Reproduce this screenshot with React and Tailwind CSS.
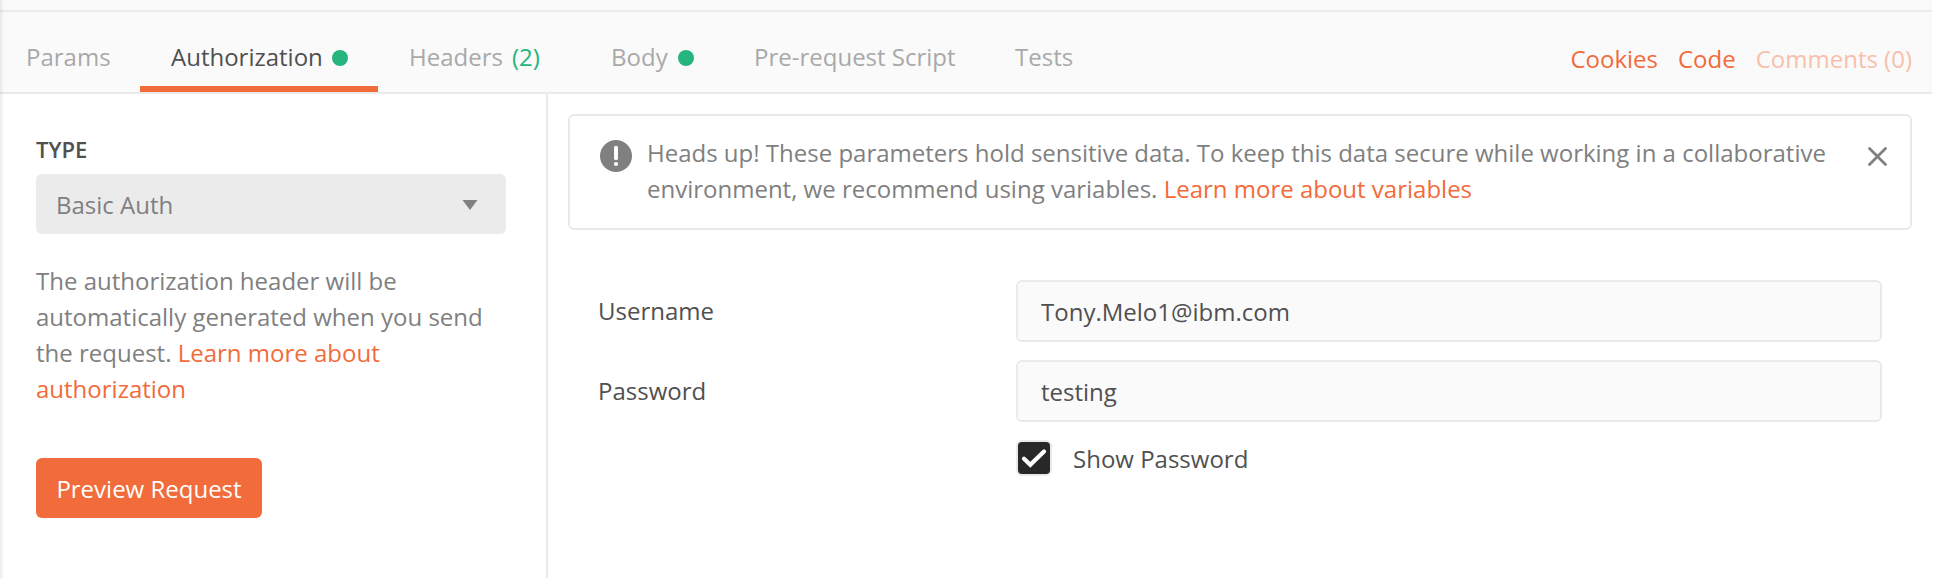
const tabs = [
  { label: "Params", box: "w-[140px] pl-[26px]" },
  { label: "Authorization", box: "w-[238px] pl-[31px]", active: true, dot: "ml-[9px]" },
  { label: "Headers", box: "w-[202px] pl-[31px]", count: "(2)" },
  { label: "Body", box: "w-[143px] pl-[31px]", dot: "ml-2.5" },
  { label: "Pre-request Script", box: "w-[261px] pl-[31px]" },
  { label: "Tests", box: "w-[120px] pl-[31px]" },
];

function Tab({ label, box, active, dot, count }) {
  return (
    <button
      className={`flex h-20 shrink-0 items-start border-b-[6px] pt-[27px] whitespace-nowrap ${box} ${
        active ? "border-[#f26b3a] text-[#505050]" : "border-transparent text-[#a9a9a9]"
      }`}
    >
      {label}
      {count && <span className="ml-[9px] text-[#26b47f]">{count}</span>}
      {dot && <span className={`mt-[11px] size-4 rounded-full bg-[#26b47f] ${dot}`} />}
    </button>
  );
}

function Field({ label, value }) {
  return (
    <div className="flex h-[62px] items-center">
      <label className="w-[418px] text-[#505050]">{label}</label>
      <input
        readOnly
        value={value}
        className="h-[62px] w-[866px] rounded-md border-2 border-[#eaeaea] bg-[#fafafa] px-[23px] text-[#505050] outline-none"
      />
    </div>
  );
}

export default function App() {
  return (
    <div className="relative flex h-[578px] w-[1932px] flex-col overflow-hidden bg-white font-['Open_Sans',sans-serif] text-[24px] leading-[36px] text-[#808080]">
      <div className="absolute inset-y-0 left-0 w-1 bg-linear-to-r from-black/8 to-transparent" />
      <div className="h-3 shrink-0 border-b-2 border-[#eaeaea] bg-[#fafafa]" />
      <header className="flex h-[82px] shrink-0 justify-between border-b-2 border-[#eaeaea] bg-[#fafafa]">
        <nav className="flex">
          {tabs.map((t) => (
            <Tab key={t.label} {...t} />
          ))}
        </nav>
        <div className="flex gap-5 pt-[29px] pr-5 text-[#f26b3a]">
          <a>Cookies</a>
          <a>Code</a>
          <a className="text-[#f8c0aa]">Comments (0)</a>
        </div>
      </header>
      <div className="flex min-h-0 flex-1">
        <aside className="w-[548px] shrink-0 border-r-2 border-[#eaeaea] pt-[37px] pl-9">
          <h2 className="text-[22px] leading-9 font-semibold text-[#505050]">TYPE</h2>
          <button className="mt-[7px] flex h-[60px] w-[470px] items-center justify-between rounded-md bg-[#ebebeb] pr-7 pl-5">
            <span className="pt-0.5">Basic Auth</span>
            <svg className="mt-0.5 h-2.5 w-4" viewBox="0 0 16 10" fill="#808080">
              <path d="M0.5 0H15.5L8 10Z" />
            </svg>
          </button>
          <p className="mt-[29px] w-[470px]">
            The authorization header will be
            <br />
            automatically generated when you send
            <br />
            the request. <a className="text-[#f26b3a]">Learn more about</a>
            <br />
            <a className="text-[#f26b3a]">authorization</a>
          </p>
          <button className="mt-[51px] flex h-[60px] w-[226px] items-center justify-center rounded-md bg-[#f26b3a] pt-0.5 text-white">
            Preview Request
          </button>
        </aside>
        <main className="pt-5 pl-5">
          <div className="flex h-[116px] w-[1344px] rounded-md border-2 border-[#eaeaea] pt-[19px] pl-[30px]">
            <svg className="mt-[5px] size-8 shrink-0" viewBox="0 0 32 32">
              <circle cx="16" cy="16" r="16" fill="#808080" />
              <path d="M16 7.7V18.3" stroke="#fff" strokeWidth="4" strokeLinecap="round" />
              <circle cx="16" cy="24" r="2.1" fill="#fff" />
            </svg>
            <p className="ml-[15px] w-[1221px] shrink-0">
              Heads up! These parameters hold sensitive data. To keep this data secure while working in a collaborative
              <br />
              environment, we recommend using variables. <a className="text-[#f26b3a]">Learn more about variables</a>
            </p>
            <svg className="mt-3 size-[19px] shrink-0" viewBox="0 0 19 19">
              <path d="M1.5 1.5L17.5 17.5M17.5 1.5L1.5 17.5" stroke="#808080" strokeWidth="2.8" strokeLinecap="round" />
            </svg>
          </div>
          <form className="mt-[50px] flex flex-col gap-[18px] pl-[30px]">
            <Field label="Username" value="Tony.Melo1@ibm.com" />
            <Field label="Password" value="testing" />
            <label className="ml-[418px] flex h-9 items-start text-[#505050]">
              <span className="size-9 rounded-md border-2 border-[#eaeaea] bg-[#eaeaea]">
                <svg className="block size-8 rounded bg-[#282828]" viewBox="0 0 32 32" fill="none">
                  <path d="M6 16.8L12.3 22.8L26 9.5" stroke="#fff" strokeWidth="4.2" strokeLinecap="round" />
                </svg>
              </span>
              <span className="ml-[21px] pt-px">Show Password</span>
            </label>
          </form>
        </main>
      </div>
    </div>
  );
}
